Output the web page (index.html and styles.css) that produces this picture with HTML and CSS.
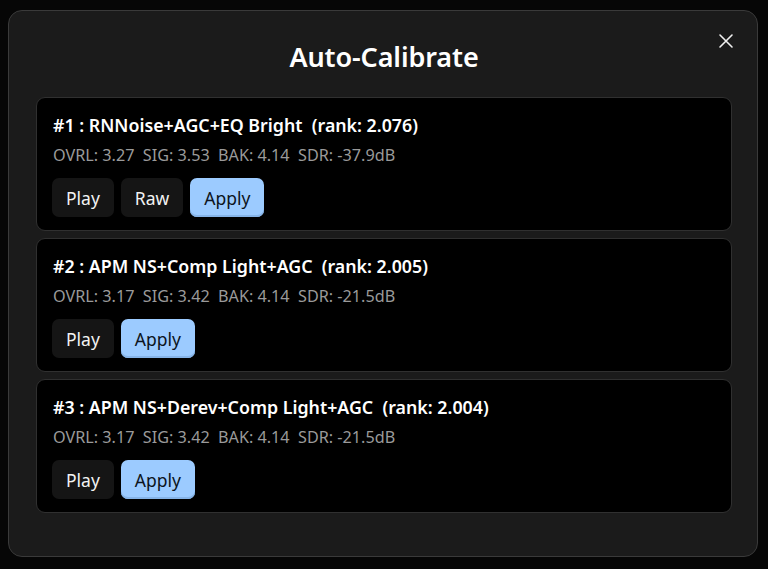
FILE: index.html
```html
<!DOCTYPE html>
<html>
<head>
<meta charset="utf-8">
<link rel="stylesheet" href="styles.css">
</head>
<body>
<div class="backdrop">
  <div class="modal">
    <div class="header">
      <h1 class="title">Auto-Calibrate</h1>
      <button class="close" aria-label="Close">
        <svg width="16" height="16" viewBox="0 0 16 16"><path d="M2 2L14 14M14 2L2 14" stroke="#f0f0f0" stroke-width="1.6" stroke-linecap="round"/></svg>
      </button>
    </div>
    <div class="list">
      <div class="card">
        <div class="name">#1 : RNNoise+AGC+EQ Bright&nbsp; (rank: 2.076)</div>
        <div class="metrics">OVRL: 3.27&nbsp; SIG: 3.53&nbsp; BAK: 4.14&nbsp; SDR: -37.9dB</div>
        <div class="actions">
          <button class="btn">Play</button>
          <button class="btn">Raw</button>
          <button class="btn primary">Apply</button>
        </div>
      </div>
      <div class="card">
        <div class="name">#2 : APM NS+Comp Light+AGC&nbsp; (rank: 2.005)</div>
        <div class="metrics">OVRL: 3.17&nbsp; SIG: 3.42&nbsp; BAK: 4.14&nbsp; SDR: -21.5dB</div>
        <div class="actions">
          <button class="btn">Play</button>
          <button class="btn primary">Apply</button>
        </div>
      </div>
      <div class="card">
        <div class="name">#3 : APM NS+Derev+Comp Light+AGC&nbsp; (rank: 2.004)</div>
        <div class="metrics">OVRL: 3.17&nbsp; SIG: 3.42&nbsp; BAK: 4.14&nbsp; SDR: -21.5dB</div>
        <div class="actions">
          <button class="btn">Play</button>
          <button class="btn primary">Apply</button>
        </div>
      </div>
    </div>
  </div>
</div>
</body>
</html>
```
FILE: styles.css
```css
* { box-sizing: border-box; }
html, body { margin: 0; padding: 0; }
body {
  background: #060606;
  font-family: "Noto Sans", "Open Sans", sans-serif;
  color: #f2f2f2;
  width: 768px;
  height: 569px;
  overflow: hidden;
}
.backdrop {
  padding: 10px 10px 0 8px;
}
.modal {
  width: 750px;
  height: 547px;
  background: #1b1b1b;
  border: 1px solid #3a3a3a;
  border-radius: 14px;
  padding: 0 25px 0 27px;
}
.header {
  position: relative;
  height: 86px;
  display: flex;
  align-items: center;
  justify-content: center;
}
.title {
  margin: 0;
  font-size: 27px;
  font-weight: 600;
  color: #ffffff;
  letter-spacing: -0.1px;
  padding-top: 4px;
}
.close {
  position: absolute;
  right: -6px;
  top: 18px;
  width: 24px;
  height: 24px;
  padding: 0;
  background: none;
  border: none;
  display: flex;
  align-items: center;
  justify-content: center;
}
.list {
  display: flex;
  flex-direction: column;
  gap: 7px;
}
.card {
  height: 134px;
  background: #000;
  border: 1px solid #303030;
  border-radius: 9px;
  padding: 15px 16px 0 15px;
}
.name {
  font-size: 17.8px;
  font-weight: 600;
  line-height: 24px;
  color: #ffffff;
  padding-left: 1px;
}
.metrics {
  font-size: 16.2px;
  line-height: 22px;
  color: #9a9a9a;
  margin-top: 7px;
  padding-left: 1px;
}
.actions {
  display: flex;
  gap: 7px;
  margin-top: 12px;
}
.btn {
  font-family: inherit;
  font-size: 17.5px;
  height: 39px;
  padding: 0 14px;
  border: none;
  border-radius: 7px;
  background: #151515;
  color: #f2f2f2;
}
.btn.primary {
  background: #9ccbff;
  color: #0c1420;
  box-shadow: inset 0 -2px 0 #86b4e8;
}
```
